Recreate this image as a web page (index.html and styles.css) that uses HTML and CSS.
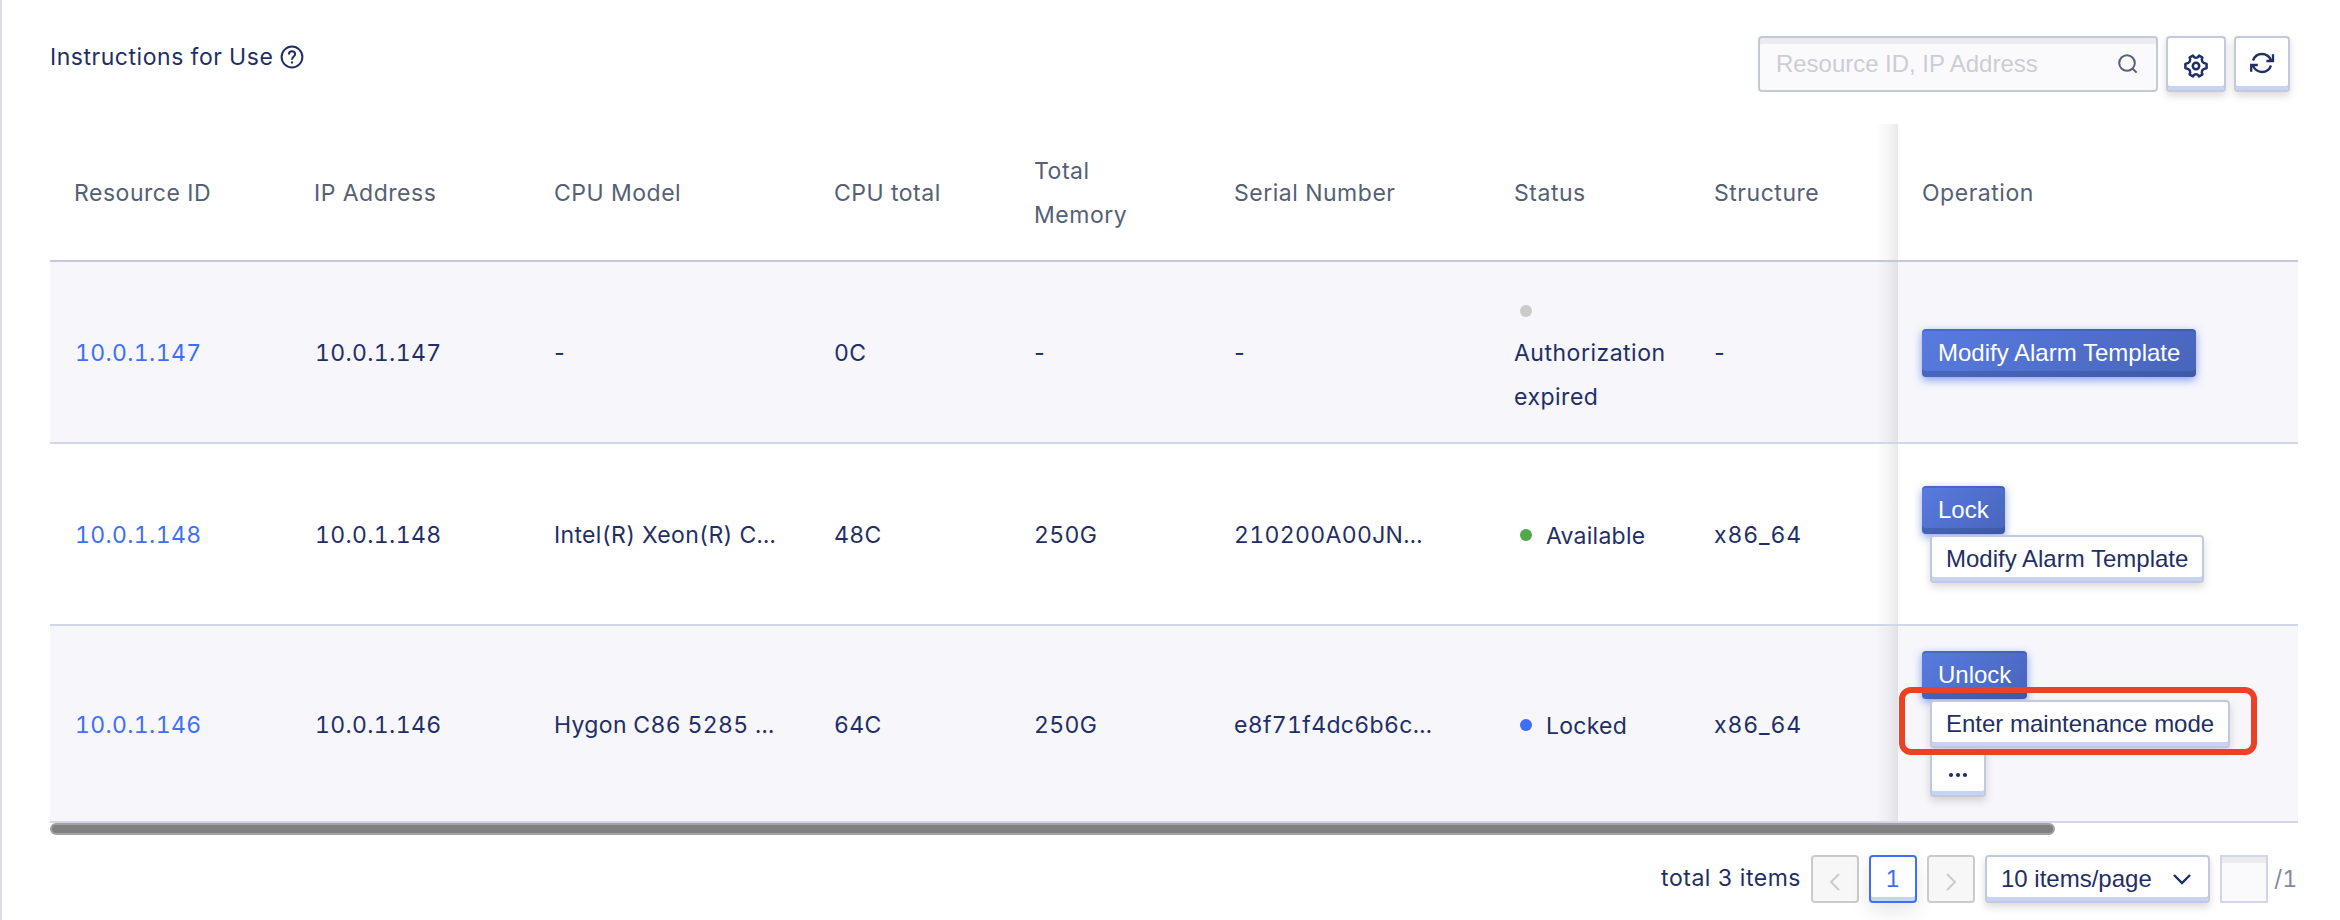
FILE: index.html
```
<!DOCTYPE html>
<html lang="en">
<head>
<meta charset="utf-8">
<title>Resources</title>
<link rel="stylesheet" href="styles.css">
</head>
<body>
<main class="page">
  <header class="toolbar">
    <div class="title">Instructions for Use
      <svg class="help" width="24" height="24" viewBox="0 0 24 24" fill="none" stroke="currentColor" stroke-width="2"><circle cx="12" cy="12" r="10.4"/><path d="M8.9 9.6C8.9 7.6 10.2 6.3 12 6.3s3.1 1.2 3.1 2.9c0 2.3-3.1 2.6-3.1 5.6"/><circle cx="12" cy="17.4" r=".5" stroke-width="1.4"/></svg>
    </div>
    <div class="tools">
      <div class="search">
        <span>Resource ID, IP Address</span>
        <svg width="22" height="22" viewBox="0 0 22 22" fill="none" stroke="currentColor" stroke-width="2"><circle cx="10" cy="10" r="7.8"/><path d="M15.2 15.2l4.4 4.4"/></svg>
      </div>
      <button class="btn tool gear">
        <svg width="26" height="26" viewBox="0 0 26 26" fill="none" stroke="currentColor" stroke-width="2.5" stroke-linejoin="round"><path d="M11.2 4.2Q13 5.3 14.8 4.2L16.1 2.6L19.4 4.5L18.8 6.6Q18.7 8.8 20.7 9.8L23.6 10.9V15.1L20.7 16.2Q18.7 17.2 18.8 19.4L19.4 21.5L16.1 23.4L14.8 21.8Q13 20.7 11.2 21.8L9.9 23.4L6.6 21.5L7.2 19.4Q7.3 17.2 5.3 16.2L2.4 15.1V10.9L5.3 9.8Q7.3 8.8 7.2 6.6L6.6 4.5L9.9 2.6Z"/><circle cx="13" cy="13" r="3.2"/></svg>
      </button>
      <button class="btn tool refresh">
        <svg width="26" height="26" viewBox="0 0 26 26" fill="none" stroke="currentColor" stroke-width="2.3"><path d="M4 10.5C5.4 6.6 9 4 13 4c4.1 0 7.3 2.3 9.2 6.4M24 4.3v6.7h-6.6M22 15.5C20.600 19.4 17 22 13 22c-4.1 0-7.3-2.3-9.200-6.400M2.200 21.700V15h6.600"/></svg>
      </button>
    </div>
  </header>

  <section class="table">
    <div class="row head">
      <div>Resource ID</div><div>IP Address</div><div>CPU Model</div><div>CPU total</div><div>Total Memory</div><div>Serial Number</div><div>Status</div><div>Structure</div><div class="op">Operation</div>
    </div>
    <div class="row shaded">
      <div class="ip link">10.0.1.147</div><div class="ip">10.0.1.147</div><div class="none">-</div><div>0C</div><div class="none">-</div><div class="none">-</div>
      <div class="status stacked"><i class="dot off"></i> Authorization expired</div><div class="none">-</div>
      <div class="op"><button class="btn primary">Modify Alarm Template</button></div>
    </div>
    <div class="row">
      <div class="ip link">10.0.1.148</div><div class="ip">10.0.1.148</div><div>Intel(R) Xeon(R) C...</div><div>48C</div><div>250G</div><div>210200A00JN...</div>
      <div class="status"><i class="dot ok"></i>Available</div><div class="arch">x86_64</div>
      <div class="op"><button class="btn primary">Lock</button><button class="btn next">Modify Alarm Template</button></div>
    </div>
    <div class="row shaded last">
      <div class="ip link">10.0.1.146</div><div class="ip">10.0.1.146</div><div>Hygon C86 5285 ...</div><div>64C</div><div>250G</div><div>e8f71f4dc6b6c...</div>
      <div class="status"><i class="dot locked"></i>Locked</div><div class="arch">x86_64</div>
      <div class="op"><button class="btn primary">Unlock</button><button class="btn next">Enter maintenance mode</button><button class="btn next more"><svg width="20" height="6" viewBox="0 0 20 6" fill="currentColor"><circle cx="3" cy="3" r="2.1"/><circle cx="10" cy="3" r="2.1"/><circle cx="17" cy="3" r="2.1"/></svg></button><span class="callout"></span></div>
    </div>
  </section>
  <div class="scrollbar"></div>

  <footer class="pager">
    <span class="total">total 3 items</span>
    <span class="page-btn disabled"><svg width="12" height="20" viewBox="0 0 12 20" fill="none" stroke="currentColor" stroke-width="2"><path d="M10 2L2 10l8 8"/></svg></span>
    <span class="page-btn current">1</span>
    <span class="page-btn disabled"><svg width="12" height="20" viewBox="0 0 12 20" fill="none" stroke="currentColor" stroke-width="2"><path d="M2 2l8 8-8 8"/></svg></span>
    <button class="btn size">10 items/page<svg width="20" height="14" viewBox="0 0 20 14" fill="none" stroke="currentColor" stroke-width="2.4"><path d="M2 3l8 8 8-8"/></svg></button>
    <span class="jump"></span>
    <span class="of">/1</span>
  </footer>
</main>
</body>
</html>
```
FILE: styles.css
```
* { box-sizing: border-box; }
body {
  margin: 0;
  background: #fff;
  color: #1f2f66;
  font: 23px/44px Inter, "Liberation Sans", sans-serif;
  letter-spacing: .53px;
  font-feature-settings: "tnum" 1;
}
svg { display: block; flex: none; }
.page {
  height: 920px;
  padding: 36px 42px 0 48px;
  border-left: 2px solid #dcdce7;
  overflow: hidden;
}

.toolbar { display: flex; justify-content: space-between; height: 88px; padding-right: 8px; }
.title { display: flex; align-items: center; gap: 7px; height: 42px; }
.tools { display: flex; height: 56px; gap: 8px; }
.search {
  display: flex; align-items: center; justify-content: space-between;
  width: 400px; height: 56px; padding: 0 17px 0 16px;
  border: 2px solid #c4c9d9; border-radius: 4px;
  background: #fafafd; box-shadow: inset 0 6px #ececef;
  color: #55617a;
  font-family: "Liberation Sans", sans-serif; font-size: 24px; letter-spacing: -.03px;
}
.search span { color: #cdccd6; }

.btn {
  display: block; height: 48px; padding: 0 14px;
  border: 2px solid #c4c9d9; border-radius: 4px;
  background: #fff; color: #1f2f66;
  box-shadow: inset 0 -4px #c5d3f6, 0 4px 8px rgba(0, 0, 0, .15);
  font: 24px/44px "Liberation Sans", sans-serif; letter-spacing: 0;
  white-space: nowrap;
}
.btn.primary {
  padding: 0 16px; border: 0; line-height: 48px; color: #fff;
  background: linear-gradient(135deg, #587be0, #4865bb);
  box-shadow: inset 0 2px rgba(40, 60, 120, .25), inset 0 -6px rgba(45, 65, 125, .32), 0 3px 8px rgba(61, 99, 235, .6);
}
.btn.next { margin: 1px 0 0 8px; }
.btn.more { width: 56px; padding: 4px 16px 0; }
.btn.tool { display: flex; align-items: center; justify-content: center; height: 56px; padding: 0; }
.btn.gear { width: 60px; padding-top: 4px; }
.btn.refresh { width: 56px; padding-bottom: 2px; }

.row {
  display: grid;
  grid-template-columns: 240px 240px 280px 200px 200px 280px 200px 208px 400px;
  align-items: center;
  width: 2248px; height: 182px;
  border-bottom: 2px solid #d3d5e9;
  letter-spacing: .33px;
}
.row > div { padding: 2px 24px 0; }
.row.head { height: 138px; border-color: #c4c8da; color: #556075; letter-spacing: .53px; }
.row.shaded { background: #f6f6fb; }
.row.last { height: 197px; }
.row > .ip { padding-left: 25px; letter-spacing: .35px; }
.row > .none { padding-left: 22px; }
.row > .arch { letter-spacing: .9px; }
.row > .link { color: #3f6ef9; }

.row > .op {
  position: relative;
  display: flex; flex-direction: column; align-items: flex-start; justify-content: center;
  align-self: stretch; padding-top: 1px;
}
.op::before {
  content: ""; position: absolute; top: 0; bottom: 0; left: -23px; width: 23px;
  background: linear-gradient(to left, rgba(0, 0, 0, .085), rgba(0, 0, 0, .035) 45%, rgba(0, 0, 0, 0));
}
.callout {
  position: absolute; left: 1px; top: 61px; width: 358px; height: 68px;
  border: 6px solid #ed4127; border-radius: 12px;
}

.row > .status { display: flex; align-items: center; padding-top: 4px; padding-right: 0; letter-spacing: .25px; }
.row > .stacked { display: block; width: 190px; padding-top: 2px; letter-spacing: .5px; }
.dot { width: 12px; height: 12px; margin: 0 14px 2px 6px; border-radius: 50%; flex: none; }
.stacked .dot { display: block; margin: 18px 0 14px 6px; }
.off { background: #cbcbcb; }
.ok { background: #4fa944; }
.locked { background: #3f6ef9; }

.scrollbar { width: 2005px; height: 12px; border: 2px solid #a3a3a3; border-radius: 6px; background: #808080; }

.pager { display: flex; align-items: center; justify-content: flex-end; gap: 10px; height: 48px; margin-top: 20px; width: 2248px; }
.total { padding-bottom: 2px; }
.page-btn {
  display: flex; align-items: center; justify-content: center;
  width: 48px; height: 48px; border: 2px solid #cbcbcb; border-radius: 4px; background: #f7f7f7; color: #cbcbcb;
}
.page-btn.disabled { padding-top: 5px; }
.page-btn.current {
  padding-bottom: 1px; border-color: #3f6ef9; background: #fff; color: #3f6ef9;
  box-shadow: inset 0 -4px #c5d3f0, 0 8px 20px rgba(0, 0, 0, .1);
}
.btn.size { display: flex; align-items: center; justify-content: space-between; width: 225px; padding-right: 16px; }
.jump { width: 48px; height: 48px; border: 2px solid #d3d5e9; background: #fafafd; box-shadow: inset 0 6px #ececef; }
.of { margin-left: -4px; width: 24px; color: #7f8aa8; letter-spacing: 0; white-space: nowrap; }
```
